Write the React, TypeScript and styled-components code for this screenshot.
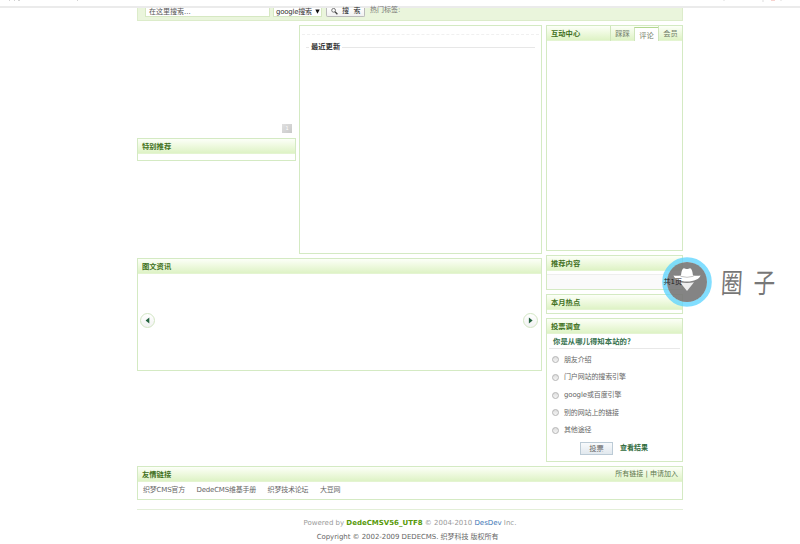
import React from 'react';
import styled, { createGlobalStyle } from 'styled-components';

const GlobalStyle = createGlobalStyle`
  * { box-sizing: border-box; }
  body {
    margin: 0;
    width: 800px;
    height: 544px;
    overflow: hidden;
    background: #fff;
    color: #666;
    font-family: "DejaVu Sans", "Noto Sans CJK SC", sans-serif;
    font-size: 7px;
    line-height: 10px;
  }
`;

const Screen = styled.div`
  position: relative;
  height: 544px;
  overflow: hidden;
`;

const BrowserEdge = styled.div`
  height: 8px;
  border-bottom: 2px solid #ebebeb;
`;

const EdgeMarks = styled.svg`
  display: block;
`;

const Page = styled.div`
  width: 546px;
  margin-left: 137px;
`;

const SearchBar = styled.div`
  display: flex;
  height: 13px;
  padding-left: 7px;
  background: #eaf5dc;
  border: solid #dcecca;
  border-width: 0 1px 1px;
  color: #555;
`;

const SearchInput = styled.div`
  width: 125px;
  height: 9px;
  padding-left: 3px;
  background: #fff;
  border: solid #d6e8c2;
  border-width: 0 1px 1px;
  line-height: 8px;
`;

const SearchSelect = styled.div`
  display: flex;
  gap: 3px;
  width: 49px;
  height: 9px;
  margin-left: 3px;
  padding-left: 2px;
  background: #fff;
  border: solid #d6e8c2;
  border-width: 0 1px 1px;
  line-height: 8px;
  color: #333;
  white-space: nowrap;
  letter-spacing: -0.25px;
`;

const Arrow = styled.svg`
  width: 5px;
  height: 5px;
  margin-top: 1px;
`;

const SearchButton = styled.div`
  display: flex;
  width: 39px;
  height: 9px;
  margin-left: 4px;
  padding-left: 4px;
  background: linear-gradient(#fff, #f1f1f1);
  border: 1px solid #bbb;
  border-top: 0;
  border-radius: 0 0 2px 2px;
  line-height: 7px;
  color: #222;
  white-space: nowrap;

  svg { margin-right: 4px; }
`;

const HotTags = styled.span`
  margin-left: 5px;
  line-height: 5px;
  color: #777;
`;

const Columns = styled.div`
  display: flex;
  justify-content: space-between;
  margin-top: 4px;
`;

const MainColumn = styled.div`
  width: 405px;
`;

const SideColumn = styled.div`
  width: 137px;
`;

const TopRow = styled.div`
  display: flex;
  justify-content: space-between;
  height: 229px;
`;

const FocusColumn = styled.div`
  width: 159px;
`;

const SlideArea = styled.div`
  display: flex;
  justify-content: flex-end;
  align-items: flex-end;
  height: 113px;
  padding: 0 4px 5px 0;
`;

const SlideNumber = styled.div`
  width: 10px;
  height: 9px;
  background: linear-gradient(135deg, #e0e0e0, #c9c9c9);
  text-align: center;
  color: #fff;
  font-size: 5px;
  line-height: 9px;
`;

const Panel = styled.section<{ $height: number; $gap?: number }>`
  height: ${p => p.$height}px;
  margin-top: ${p => p.$gap ?? 0}px;
  border: 1px solid #d4eac3;
  background: #fff;
`;

const PanelHead = styled.header`
  display: flex;
  justify-content: space-between;
  height: 15px;
  padding: 0 4px;
  background: linear-gradient(#fcfff8 0%, #f0fae2 40%, #dff3c7 90%, #e6f5d6 100%);
  line-height: 15px;
`;

const PanelTitle = styled.h2`
  margin: 0;
  color: #3f7021;
  font-size: 7.3px;
  font-weight: 700;
`;

const LatestPanel = styled.section`
  width: 243px;
  height: 229px;
  padding: 8px 6px 0;
  border: 1px solid #d4eac3;
`;

const DashedRule = styled.div`
  height: 8px;
  margin: 0 -4px;
  border-top: 1px dashed #f0f0f0;
`;

const LatestHead = styled.div`
  display: flex;
  align-items: center;
  gap: 2px;
  color: #333;
  font-size: 7.3px;
  font-weight: 700;

  &::before { content: ''; width: 3px; height: 1px; background: #e7e7e7; }
  &::after { content: ''; flex: 1; height: 1px; background: #e7e7e7; }
`;

const Tabs = styled.div`
  display: flex;
  margin-right: -4px;
`;

const Tab = styled.span<{ $active?: boolean }>`
  width: 24px;
  height: ${p => (p.$active ? 14 : 15)}px;
  margin-top: ${p => (p.$active ? 1 : 0)}px;
  border-left: 1px solid #cfe5bb;
  border-top: ${p => (p.$active ? '1px solid #b2d78f' : '0')};
  background: ${p => (p.$active ? '#fff' : 'transparent')};
  line-height: 16px;
  text-align: center;
  color: #6f7b66;
  font-size: 7.3px;
`;

const PageCount = styled.div`
  height: 15px;
  margin-top: 3px;
  background: #fafafa;
  border-top: 1px solid #eee;
  line-height: 15px;
  text-align: right;
  color: #222;
`;

const PageCountLabel = styled.span`
  position: relative;
  z-index: 2;
`;

const Carousel = styled.div`
  display: flex;
  justify-content: space-between;
  align-items: center;
  height: 93px;
  padding: 0 3px 0 2px;
`;

const RoundButton = styled.div`
  display: flex;
  align-items: center;
  justify-content: center;
  width: 15px;
  height: 15px;
  border: 1px solid #d2e6c3;
  border-radius: 50%;
  background: linear-gradient(#fff, #f2f2f2);
`;

const Question = styled.div`
  height: 15px;
  margin: 0 2px 2px;
  padding-left: 4px;
  border-bottom: 1px solid #e8e8e8;
  line-height: 14px;
  color: #33704c;
  font-family: "Noto Sans CJK SC", sans-serif;
  font-size: 7.35px;
  font-weight: 700;
  letter-spacing: 0.05px;
  white-space: nowrap;
`;

const Option = styled.div`
  display: flex;
  align-items: center;
  gap: 5px;
  height: 17.65px;
  padding-left: 5px;
  letter-spacing: -0.13px;
`;

const Radio = styled.span`
  width: 7px;
  height: 7px;
  border: 1px solid #b5b5b5;
  border-radius: 50%;
  background: linear-gradient(#ddd, #f5f5f5);
`;

const VoteActions = styled.div`
  display: flex;
  gap: 7px;
  height: 13px;
  margin: 3px 0 0 33px;
  line-height: 12px;
`;

const VoteButton = styled.div`
  width: 33px;
  height: 13px;
  border: 1px solid #bccbd6;
  background: linear-gradient(#f8fafc, #e1e8ee);
  text-align: center;
  font-size: 7.3px;
`;

const ResultLink = styled.span`
  color: #2f6b3c;
  font-weight: 700;
`;

const HeadLinks = styled.span`
  color: #60794c;
`;

const FriendLinks = styled.div`
  display: flex;
  gap: 11.5px;
  padding: 3px 5px;
  line-height: 10px;
  white-space: nowrap;
  letter-spacing: -0.2px;
`;

const Footer = styled.footer`
  margin-top: 9px;
  padding-top: 7px;
  border-top: 1px solid #e3efd8;
  text-align: center;
  line-height: 13.5px;
`;

const Powered = styled.div`
  color: #999;
  b { color: #589a0a; }
  span { color: #3d76b5; }
`;

const Copyright = styled.div`
  padding-right: 5px;
  letter-spacing: -0.05px;
`;

const Watermark = styled.div`
  position: absolute;
  z-index: 1;
  left: 662px;
  top: 257px;
  display: flex;
  align-items: center;
  height: 50px;
`;

const WatermarkName = styled.span`
  margin-left: 9px;
  color: #777;
  font-size: 24px;
  font-weight: 400;
  line-height: 30px;
  letter-spacing: 12px;
  white-space: nowrap;
  transform: translateY(2px) scale(0.9, 1.15) skewX(-4deg);
  transform-origin: left center;
`;

const options = ['朋友介绍', '门户网站的搜索引擎', 'google或百度引擎', '别的网站上的链接', '其他途径'];
const friends = ['织梦CMS官方', 'DedeCMS维基手册', '织梦技术论坛', '大豆网'];

export default function App() {
  return (
    <Screen lang="zh-CN">
      <GlobalStyle />
      <BrowserEdge>
        <EdgeMarks width="800" height="4" viewBox="0 0 800 4">
          <path d="M9 0h1M14 0h1M18 0h2M77 0h1" stroke="#aaa" />
          <path d="M724 0v1M763 0v2M780 0h2" stroke="#ddd" />
          <path d="M771 0h4" stroke="#efa7a0" />
        </EdgeMarks>
      </BrowserEdge>
      <Page>
        <SearchBar>
          <SearchInput>在这里搜索...</SearchInput>
          <SearchSelect>
            google搜索
            <Arrow viewBox="0 0 5 5"><path d="M.3 .5h4.4L2.5 4.7z" fill="#111" /></Arrow>
          </SearchSelect>
          <SearchButton>
            <svg width="7" height="7" viewBox="0 0 7 7" fill="none" stroke="#444">
              <circle cx="2.6" cy="2.3" r="1.9" strokeWidth=".7" />
              <path d="M4 3.8l2.4 2.4" strokeWidth="1.3" />
            </svg>
            搜 &nbsp;索
          </SearchButton>
          <HotTags>热门标签:</HotTags>
        </SearchBar>

        <Columns>
          <MainColumn>
            <TopRow>
              <FocusColumn>
                <SlideArea><SlideNumber>1</SlideNumber></SlideArea>
                <Panel $height={23}>
                  <PanelHead><PanelTitle>特别推荐</PanelTitle></PanelHead>
                </Panel>
              </FocusColumn>
              <LatestPanel>
                <DashedRule />
                <LatestHead>最近更新</LatestHead>
              </LatestPanel>
            </TopRow>
            <Panel $height={113} $gap={4}>
              <PanelHead><PanelTitle>图文资讯</PanelTitle></PanelHead>
              <Carousel>
                <RoundButton>
                  <svg width="5" height="7" viewBox="0 0 5 7"><path d="M4.3.5v6L.6 3.5z" fill="#24633f" /></svg>
                </RoundButton>
                <RoundButton>
                  <svg width="5" height="7" viewBox="0 0 5 7"><path d="M.9.5v6l3.7-3z" fill="#24633f" /></svg>
                </RoundButton>
              </Carousel>
            </Panel>
          </MainColumn>

          <SideColumn>
            <Panel $height={226}>
              <PanelHead>
                <PanelTitle>互动中心</PanelTitle>
                <Tabs>
                  <Tab>踩踩</Tab>
                  <Tab $active>评论</Tab>
                  <Tab>会员</Tab>
                </Tabs>
              </PanelHead>
            </Panel>
            <Panel $height={35} $gap={4}>
              <PanelHead><PanelTitle>推荐内容</PanelTitle></PanelHead>
              <PageCount><PageCountLabel>共1页</PageCountLabel></PageCount>
            </Panel>
            <Panel $height={20} $gap={4}>
              <PanelHead><PanelTitle>本月热点</PanelTitle></PanelHead>
            </Panel>
            <Panel $height={144} $gap={4}>
              <PanelHead><PanelTitle>投票调查</PanelTitle></PanelHead>
              <Question>你是从哪儿得知本站的？</Question>
              {options.map(o => <Option key={o}><Radio />{o}</Option>)}
              <VoteActions>
                <VoteButton>投票</VoteButton>
                <ResultLink>查看结果</ResultLink>
              </VoteActions>
            </Panel>
          </SideColumn>
        </Columns>

        <Panel $height={34} $gap={4}>
          <PanelHead>
            <PanelTitle>友情链接</PanelTitle>
            <HeadLinks>所有链接 | 申请加入</HeadLinks>
          </PanelHead>
          <FriendLinks>{friends.map(f => <span key={f}>{f}</span>)}</FriendLinks>
        </Panel>

        <Footer>
          <Powered>Powered by <b>DedeCMSV56_UTF8</b> © 2004-2010 <span>DesDev</span> Inc.</Powered>
          <Copyright>Copyright © 2002-2009 DEDECMS. 织梦科技 版权所有</Copyright>
        </Footer>
      </Page>

      <Watermark>
        <svg width="50" height="50" viewBox="0 0 50 50">
          <circle cx="25" cy="25" r="22.3" fill="none" stroke="#58d3ff" strokeOpacity=".75" strokeWidth="5" />
          <circle cx="25" cy="25" r="20" fill="#777" fillOpacity=".9" />
          <path d="M19 18.500C19.500 14 20.500 11 22 11.200c1 .2 1.700.8 3 .8s2-.8 3-.8c1.500 0 2.500 3 3 7.300 3 .4 6 .3 7.500-.1-1 3.600-6.500 6-13.500 6s-12.500-2.400-13.500-6c1.500.4 4.500.5 7.500.1z" fill="#fff" />
          <path d="M18 25.200q7 1.600 14 0L25 34z" fill="#eee" />
          <path d="M18.500 19.300q6.500 2 13 0" fill="none" stroke="#999" strokeWidth=".6" />
        </svg>
        <WatermarkName>圈子</WatermarkName>
      </Watermark>
    </Screen>
  );
}
